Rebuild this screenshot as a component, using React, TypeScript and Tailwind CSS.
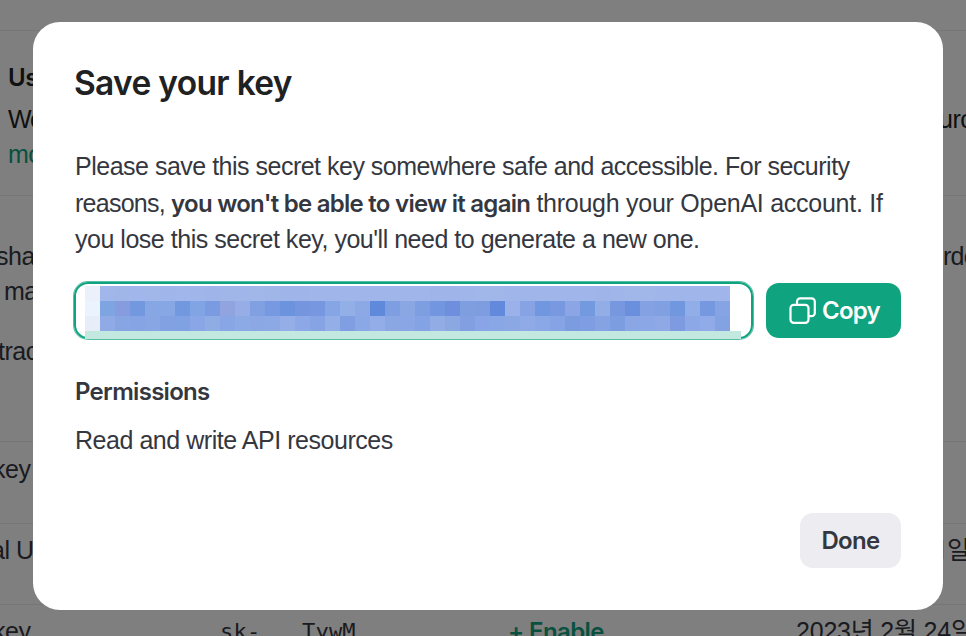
import React from "react";

const ROW_TOP =
  "a1b6ea a0b6e9 a1b6ea a1b6e9 a0b5e9 a1b6ea a0b5e9 9fb5e9 a0b6e8 a0b5e9 a1b6e9 a0b5e8 9fb4e8 9fb4e8 a0b5e9 a0b5e9 a0b5e9 a0b5e9 a0b5e9 a0b5e9 a0b5e9 a0b5e9 9fb4e8 9fb4e8 a0b5e9 a1b6e9 a1b6e9 a0b5e9 a0b5e9 a0b5e9 a0b5e9 a0b5e9 a0b5e9 9fb4e8 a0b5e9 a1b6e9 a1b6e9 a0b5e9 a0b5e9 a0b5e9 a0b5e9 a0b5e9".split(" ");
const ROW_MIDDLE =
  "7ea4e2 869cdf 7298e0 87a6e4 87a6e4 7298e0 81a4e4 7a9be1 91a4e0 97ade6 81a0e1 7799e1 6b93de 7695df 7798e0 85a5e5 92afe8 8ca9e5 5f8adb 7d9ee1 8aa7e3 7d9ee0 7297e0 6f8edd 7f9ee0 7d9de0 6289dc 9ab1e9 88a3e4 7197e1 7898df 8ba5e5 7399df 93ade7 7797df 6a8fdd 84a2e3 80a0e1 7197df 92aee8 7698e0 86a4e4".split(" ");
const ROW_BOTTOM =
  "8faae5 87a4e3 86a4e3 87a6e3 82a1e3 80a1e2 8aa6e7 90ace4 88a5e5 8caae6 8ba8e5 8ca9e5 95aee7 8ca8e7 86a3e3 94afe7 809fe2 8aa7e6 92ade7 8aa7e4 8ba6e5 84a3e5 92ade6 8ca8e3 819fe1 89a5e7 89a6e5 8ba8e5 8faae6 8ba8e6 86a3e5 7b9ddf 7f9de2 85a3e3 7c9ee0 8ba6e4 8ca7e5 8fa9e6 7e9be1 8ca8e6 90abe7 83a2e1".split(" ");

function MosaicRow({ lead, cells }: { lead: string; cells: string[] }) {
  return (
    <div className="flex h-[15px]">
      {[lead, ...cells].map((c, i) => (
        <span key={i} className="w-[15px] shrink-0" style={{ backgroundColor: "#" + c }} />
      ))}
    </div>
  );
}

function CopyIcon() {
  return (
    <svg width="27" height="27" viewBox="0 0 27 27" fill="none" stroke="currentColor" strokeWidth="2.2" strokeLinejoin="round" className="-mt-px shrink-0">
      <rect x="1.5" y="7.8" width="18" height="18" rx="3.2" />
      <path d="M8 7.8V4.6a3.2 3.2 0 0 1 3.2-3.2h11.4a3.2 3.2 0 0 1 3.2 3.2V16a3.2 3.2 0 0 1-3.2 3.2h-3.1" />
    </svg>
  );
}

function Page() {
  return (
    <div className="flex h-full flex-col whitespace-nowrap bg-white text-[25px] leading-[35px] tracking-[-0.48px] text-[#353740]">
      <div className="h-[31px] shrink-0 border-b border-[#ececf1]" />
      <section className="h-[165px] shrink-0 border-b border-[#ececf1] pl-[8px] pt-[29px] text-[#202123]">
        <h3 className="font-[Inter,sans-serif] text-[24px] font-semibold">Us</h3>
        <div className="mt-[7px] flex justify-between">
          <span className="tracking-[-1.2px]">We</span>
          <span className="w-[27px]">urc</span>
        </div>
        <p className="text-[#10a37f]">mo</p>
      </section>
      <section className="h-[246px] shrink-0 border-b border-[#ececf1] pt-[43px]">
        <div className="flex justify-between">
          <span className="-ml-[4px]">sha</span>
          <span className="w-[23px] tracking-[-0.8px]">rde</span>
        </div>
        <p className="pl-[4px]">ma</p>
        <p className="-ml-[2px] mt-[25px]">trac</p>
      </section>
      <div className="h-[82px] shrink-0 border-b border-[#ececf1] pt-[10px]">
        <span className="-ml-[7px]">key</span>
      </div>
      <div className="flex h-[81px] shrink-0 justify-between border-b border-[#ececf1] pt-[9px]">
        <span className="-ml-[9px]">al U</span>
        <span className="flex w-[31px] gap-[3px] leading-[31px]">
          <span className="w-[9px] font-[Inter,sans-serif] leading-[35px]">1</span>
          <span className="font-['Noto_Sans_CJK_KR',sans-serif]">일</span>
        </span>
      </div>
      <div className="flex shrink-0 pt-[9px]">
        <span className="-ml-[7px] w-[225px] shrink-0">key</span>
        <span className="w-[82px] shrink-0 pl-[2px] font-['DejaVu_Sans_Mono',monospace] text-[22px] tracking-[0.2px]">sk-</span>
        <span className="w-[208px] shrink-0 pl-[2px] font-['DejaVu_Sans_Mono',monospace] text-[22px] tracking-[0.2px]">TywM</span>
        <span className="w-[288px] shrink-0 font-[Inter,sans-serif] text-[24px] font-semibold tracking-[-0.6px] text-[#10a37f]">+ Enable</span>
        <span className="font-['Liberation_Sans','Noto_Sans_CJK_KR',sans-serif] tracking-[-0.2px]">2023년 2월 24일</span>
      </div>
    </div>
  );
}

export default function App() {
  return (
    <div className="relative h-[636px] w-[966px] overflow-hidden font-['Liberation_Sans',sans-serif]">
      <Page />
      <div className="absolute inset-0 bg-black/50 pl-[33px] pt-[22px]">
        <div
          role="dialog"
          className="h-[588px] w-[910px] whitespace-nowrap rounded-[27px] bg-white px-[42px] pt-[40px] text-[#353740]"
        >
          <h2 className="-ml-px font-[Inter,sans-serif] text-[33.5px] font-semibold leading-[42px] tracking-[-0.68px] text-[#202123]">Save your key</h2>
          <div className="mt-[44px] text-[25px] leading-[36.7px]">
            <p className="tracking-[-0.5px]">Please save this secret key somewhere safe and accessible. For security</p>
            <p className="tracking-[-0.75px]">
              reasons, <strong className="font-[Inter,sans-serif] text-[24px] font-semibold leading-none tracking-[-0.74px]">you won't be able to view it again</strong>{" "}
              <span className="tracking-[-0.26px]">through your OpenAI account. If</span>
            </p>
            <p className="tracking-[-0.48px]">you lose this secret key, you'll need to generate a new one.</p>
          </div>
          <div className="mt-[24px] flex items-center gap-[13px]">
            <div className="-ml-px h-[57px] w-[679px] rounded-[14px] border-2 border-[#10a37f] pl-[9px] pt-[2px] shadow-[0_0_0_1px_rgba(16,163,127,0.7)]">
              <MosaicRow lead="ebf0fb" cells={ROW_TOP} />
              <MosaicRow lead="ebf3fe" cells={ROW_MIDDLE} />
              <MosaicRow lead="e7edf9" cells={ROW_BOTTOM} />
              <div className="h-[8px] w-[656px] bg-[#c2e8df]" />
            </div>
            <button className="flex h-[55px] w-[135px] shrink-0 items-center gap-[6px] rounded-[13px] bg-[#10a37f] pl-[23px] font-[Inter,sans-serif] text-[24px] font-semibold tracking-[-0.8px] text-white">
              <CopyIcon />
              Copy
            </button>
          </div>
          <h3 className="mt-[35px] font-[Inter,sans-serif] text-[24px] font-semibold leading-[36px] tracking-[-0.7px]">Permissions</h3>
          <p className="mt-[12px] text-[25px] leading-[36px] tracking-[-0.46px]">Read and write API resources</p>
          <div className="mt-[55px] flex justify-end">
            <button className="h-[55px] w-[101px] rounded-[13px] bg-[#ececf1] font-[Inter,sans-serif] text-[24px] font-semibold tracking-[-0.7px]">Done</button>
          </div>
        </div>
      </div>
    </div>
  );
}
